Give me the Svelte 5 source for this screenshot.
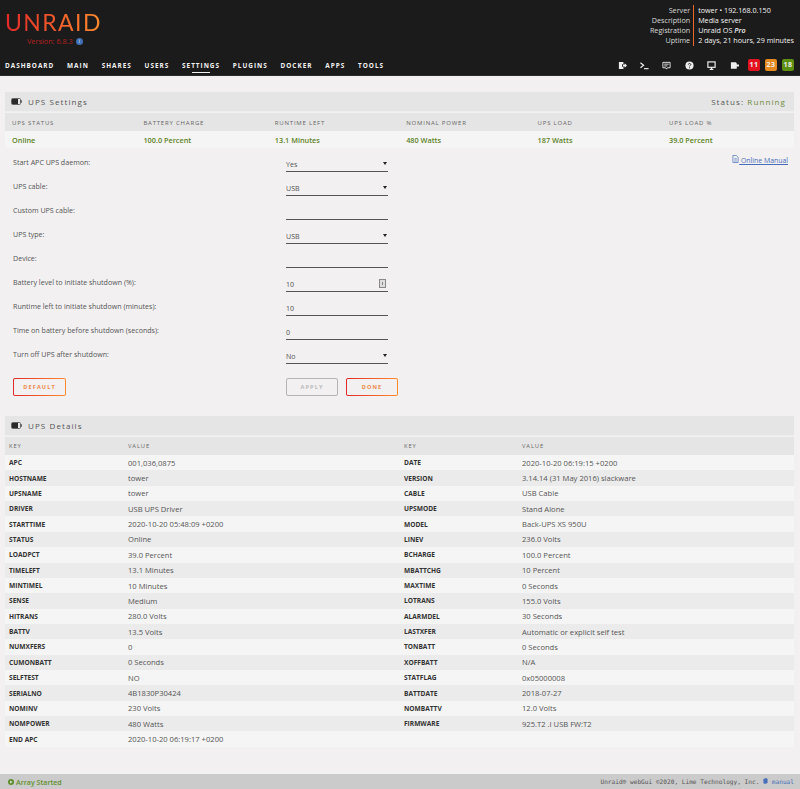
<script>
  const nav = ['DASHBOARD','MAIN','SHARES','USERS','SETTINGS','PLUGINS','DOCKER','APPS','TOOLS'];
  const info = [['Server','tower • 192.168.0.150'],['Description','Media server'],['Registration','Unraid OS Pro'],['Uptime','2 days, 21 hours, 29 minutes']];
  const stats = [['UPS STATUS','Online'],['BATTERY CHARGE','100.0 Percent'],['RUNTIME LEFT','13.1 Minutes'],['NOMINAL POWER','480 Watts'],['UPS LOAD','187 Watts'],['UPS LOAD %','39.0 Percent']];
  const form = [
    ['Start APC UPS daemon:','Yes','select'],['UPS cable:','USB','select'],['Custom UPS cable:','','text'],['UPS type:','USB','select'],['Device:','','text'],
    ['Battery level to initiate shutdown (%):','10','number'],['Runtime left to initiate shutdown (minutes):','10','text'],['Time on battery before shutdown (seconds):','0','text'],['Turn off UPS after shutdown:','No','select']
  ];
  const details = [
    ['APC','001,036,0875','DATE','2020-10-20 06:19:15 +0200'],['HOSTNAME','tower','VERSION','3.14.14 (31 May 2016) slackware'],['UPSNAME','tower','CABLE','USB Cable'],['DRIVER','USB UPS Driver','UPSMODE','Stand Alone'],['STARTTIME','2020-10-20 05:48:09 +0200','MODEL','Back-UPS XS 950U'],['STATUS','Online','LINEV','236.0 Volts'],['LOADPCT','39.0 Percent','BCHARGE','100.0 Percent'],['TIMELEFT','13.1 Minutes','MBATTCHG','10 Percent'],['MINTIMEL','10 Minutes','MAXTIME','0 Seconds'],['SENSE','Medium','LOTRANS','155.0 Volts'],['HITRANS','280.0 Volts','ALARMDEL','30 Seconds'],['BATTV','13.5 Volts','LASTXFER','Automatic or explicit self test'],['NUMXFERS','0','TONBATT','0 Seconds'],['CUMONBATT','0 Seconds','XOFFBATT','N/A'],['SELFTEST','NO','STATFLAG','0x05000008'],['SERIALNO','4B1830P30424','BATTDATE','2018-07-27'],['NOMINV','230 Volts','NOMBATTV','12.0 Volts'],['NOMPOWER','480 Watts','FIRMWARE','925.T2 .I USB FW:T2'],['END APC','2020-10-20 06:19:17 +0200','','']
  ];
</script>

{#snippet battery()}
  <svg class="batt" viewBox="0 0 11 7" width="11" height="7"><rect x="0.5" y="0.5" width="9" height="6" rx="1" fill="none" stroke="#666"/><rect x="1" y="1" width="6" height="5" fill="#2a2a2a"/><rect x="10" y="2.2" width="1" height="2.6" fill="#666"/></svg>
{/snippet}

<div class="page">
  <header>
    <div class="top">
      <div class="brand">
        <div class="logo">UNRAID</div>
        <div class="ver">Version: 6.8.3 <span class="i">i</span></div>
      </div>
      <div class="info">
        <div class="labels">{#each info as r}<div>{r[0]}</div>{/each}</div>
        <div class="vals">
          <div>{info[0][1]}</div><div>{info[1][1]}</div><div>Unraid OS <em>Pro</em></div><div>{info[3][1]}</div>
        </div>
      </div>
    </div>
    <div class="navrow">
      <nav>{#each nav as n}<a class:on={n==='SETTINGS'}>{n}</a>{/each}</nav>
      <div class="tools">
        <svg viewBox="0 0 10 10" width="9" height="9"><path d="M1 1h5v2.500H4.500v3H6V9H1z" fill="#eee"/><path d="M5.500 4h2V2.500L10 5 7.500 7.500V6h-2z" fill="#eee"/></svg>
        <svg viewBox="0 0 10 10" width="9" height="9"><path d="M.5 2 4 4.800.5 7.500" fill="none" stroke="#eee" stroke-width="1.300"/><path d="M4.500 8.500h5" stroke="#eee" stroke-width="1.300"/></svg>
        <svg viewBox="0 0 10 10" width="9" height="9"><path d="M1 1.500h8v6H6L5 9 4 7.500H1z" fill="none" stroke="#eee"/><path d="M2.500 3.500h5M2.500 5.500h3.500" stroke="#eee"/></svg>
        <svg viewBox="0 0 10 10" width="9" height="9"><circle cx="5" cy="5" r="4.500" fill="#eee"/><path d="M3.700 4c0-1.700 2.700-1.700 2.700 0 0 1-1.400 1-1.400 2" fill="none" stroke="#1c1b1b"/><circle cx="5" cy="7.500" r=".6" fill="#1c1b1b"/></svg>
        <svg viewBox="0 0 10 10" width="9" height="9"><rect x="1" y="1" width="8" height="6" fill="none" stroke="#eee" stroke-width="1.300"/><path d="M3 9.300h4M5 7v2" stroke="#eee" stroke-width="1.300"/></svg>
        <svg viewBox="0 0 10 10" width="9" height="9"><path d="M1 1.500h5.500l1 1V4H10v2H7.500v2.500H1z" fill="#eee"/></svg>
        <div class="badges"><b class="r">11</b><b class="o">23</b><b class="g">18</b></div>
      </div>
    </div>
  </header>

  <main>
    <section>
      <div class="title">
        <span class="tl">{@render battery()}UPS Settings</span>
        <span class="status">Status: <span class="run">Running</span></span>
      </div>
      <div class="stats head">{#each stats as s}<div>{s[0]}</div>{/each}</div>
      <div class="stats vals2">{#each stats as s}<div>{s[1]}</div>{/each}</div>

      <div class="formwrap">
        <a class="manual"><svg viewBox="0 0 8 9" width="7" height="8"><path d="M1 .5h4l2 2v6H1z" fill="none" stroke="#486dba" stroke-width=".8"/><path d="M2.500 4h3M2.500 5.500h3M2.500 7h3" stroke="#486dba" stroke-width=".6"/></svg> Online Manual</a>
        {#each form as f}
          <div class="frow">
            <label>{f[0]}</label>
            <div class="field">
              <span>{f[1]}</span>
              {#if f[2]==='select'}<i class="caret"></i>{/if}
              {#if f[2]==='number'}<i class="spin"></i>{/if}
            </div>
          </div>
        {/each}
        <div class="btns">
          <button class="btn act default">DEFAULT</button>
          <div class="right">
            <button class="btn off">APPLY</button>
            <button class="btn act">DONE</button>
          </div>
        </div>
      </div>
    </section>

    <section class="s2">
      <div class="title"><span class="tl">{@render battery()}UPS Details</span></div>
      <div class="drow dhead"><div>KEY</div><div>VALUE</div><div>KEY</div><div>VALUE</div></div>
      {#each details as d}
        <div class="drow"><b>{d[0]}</b><div>{d[1]}</div><b>{d[2]}</b><div>{d[3]}</div></div>
      {/each}
    </section>
  </main>

  <footer>
    <span class="arr"><svg viewBox="0 0 10 10" width="6" height="6"><circle cx="5" cy="5" r="5" fill="#5f8f2b"/><path d="M3.500 2.500 7.500 5l-4 2.500z" fill="#e0e0e0"/></svg> Array Started</span>
    <span class="copy">Unraid® webGui ©2020, Lime Technology, Inc. <svg viewBox="0 0 6 7" width="5" height="6"><path d="M.5 1 4 0l1.500 1v5L2 7 .5 6z" fill="#486dba"/></svg> <span class="man">manual</span></span>
  </footer>
</div>

<style>
  :global(body){margin:0;background:#f2f0f1;}
  .page{width:800px;height:789px;display:flex;flex-direction:column;font-family:"Open Sans","Liberation Sans",sans-serif;font-size:7.1px;color:#555;overflow:hidden;}
  header{background:#1c1b1b;height:76px;box-sizing:border-box;flex:none;display:flex;flex-direction:column;justify-content:space-between;border-bottom:1px solid #2b2a2a;}
  .top{display:flex;justify-content:space-between;padding:5px 6px 0 5px;}
  .brand{padding-top:6px;}
  .logo{font-family:Lato,sans-serif;font-weight:400;font-size:23px;line-height:22px;letter-spacing:1.400px;background:linear-gradient(90deg,#e22828,#ff8c2f);-webkit-background-clip:text;background-clip:text;color:transparent;width:max-content;}
  .ver{color:#b3211f;font-size:7.3px;line-height:10px;margin:3px 0 0 22px;display:flex;align-items:center;gap:3px;}
  .i{display:inline-block;width:7px;height:7px;border-radius:50%;background:#3f6fb5;color:#eee;font-size:5.500px;line-height:7px;text-align:center;}
  .info{display:flex;color:#f2f2f2;font-size:7.2px;line-height:10px;}
  .labels{text-align:right;padding-right:3px;color:#d8d8d8;}
  .vals{border-left:1px solid #e8672b;padding-left:4px;}
  .vals em{font-weight:600;}
  .navrow{display:flex;justify-content:space-between;align-items:flex-end;padding:0 6px 4px 5px;}
  nav{display:flex;gap:12.800px;}
  nav a{color:#f2f2f2;font-weight:700;font-size:6.400px;letter-spacing:1px;line-height:10px;position:relative;}
  nav a.on::after{content:"";position:absolute;left:10px;right:10px;bottom:-2px;height:1px;background:#f2f2f2;}
  .tools{display:flex;align-items:center;gap:13.400px;}
  .badges{display:flex;gap:5px;margin-left:-4px;}
  .badges b{width:12px;height:12px;border-radius:2px;font-size:7px;line-height:12px;text-align:center;color:#eee;letter-spacing:.6px;font-weight:700;}
  .r{background:#e3131f;}.o{background:#e68a1f;}.g{background:#5c8f12;}
  main{flex:1;padding:16px 6px 0 5px;}
  .title{height:19px;box-sizing:content-box;background:#e5e5e5;border-bottom:1px solid #eee;display:flex;justify-content:space-between;align-items:center;padding:0 8px 0 6px;font-size:8px;letter-spacing:1.100px;color:#555;margin-bottom:1px;}
  .tl{display:flex;align-items:center;gap:6px;}
  .run{color:#6d8a3a;}
  .stats{display:grid;grid-template-columns:repeat(6,131.400px);padding-left:7px;}
  .head{height:18px;align-items:center;background:#e5e5e5;font-size:6px;letter-spacing:.8px;color:#666;padding-top:1px;box-sizing:border-box;}
  .vals2{height:17px;align-items:center;background:#f5f5f5;color:#5d8427;font-weight:600;font-size:7.3px;}
  .formwrap{position:relative;padding:2px 0 0 0;}
  .manual{position:absolute;right:6px;top:7px;color:#486dba;text-decoration:underline;font-size:6.900px;}
  .frow{height:24px;display:flex;align-items:center;padding-left:8px;}
  .frow label{width:273px;margin-top:0;color:#555;}
  .field{width:102px;height:15px;border-bottom:1px solid #555;box-sizing:border-box;display:flex;justify-content:space-between;align-items:center;padding:0;position:relative;top:2px;color:#555;}
  .caret{width:0;height:0;border-left:2.500px solid transparent;border-right:2.500px solid transparent;border-top:3.500px solid #222;margin-right:1px;}
  .spin{width:5px;height:7px;border:1px solid #888;background:linear-gradient(#888,#888) center/1px 3px no-repeat,#ddd;margin-right:2px;}
  .btns{display:flex;margin-top:12px;padding-left:8px;}
  .btn{height:18px;box-sizing:border-box;background:transparent;border:1.400px solid;border-radius:2px;font-family:inherit;font-size:5.600px;font-weight:700;letter-spacing:1.100px;padding:0;width:52px;}
  .act{border-color:transparent;color:#ef8a4a;background:linear-gradient(#f2f0f1,#f2f0f1) padding-box,linear-gradient(90deg,#e22828,#ff8c2f) border-box;}
  .default{width:53px;}
  .off{border-color:#b5b5b5;color:#bbb;}
  .right{display:flex;gap:8px;margin-left:220px;}
  .s2{margin-top:20px;}
  .drow{display:grid;grid-template-columns:119px 276px 118px 1fr;padding-left:4px;height:15.360px;align-items:center;font-size:7.600px;background:#f5f5f5;color:#555;}
  .drow:nth-child(even){background:#ebebeb;}
  .drow b{color:#333;font-weight:700;font-size:6.600px;}
  .dhead{height:18px;background:#e5e5e5!important;font-size:5.800px;letter-spacing:.9px;color:#666;}
  footer{height:15px;flex:none;background:#cbcbcb;display:flex;justify-content:space-between;align-items:center;padding:0 6px 0 8px;}
  .arr{color:#5f8f2b;font-weight:600;font-size:7.100px;display:flex;gap:2px;align-items:center;}
  .copy{font-family:"DejaVu Sans Mono",monospace;font-size:6.150px;color:#555;}
  .man{color:#486dba;}
</style>
